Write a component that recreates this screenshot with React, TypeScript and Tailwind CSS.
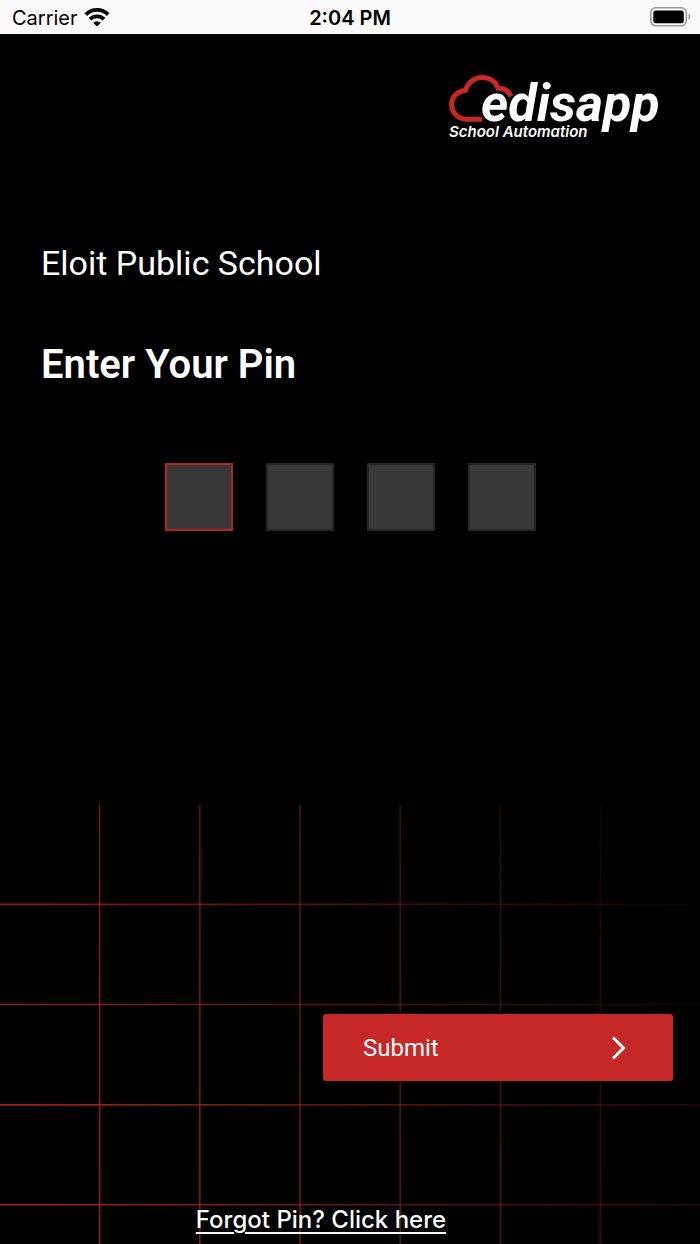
import { useState } from "react";

const PIN_LENGTH = 4;

function StatusBar() {
  return (
    <header className="grid h-[34px] grid-cols-3 items-center bg-[#fafafa] px-2 pt-0.5 font-['Inter',sans-serif] text-xl text-black">
      <div className="flex items-center gap-1.5 pl-1">
        <span>Carrier</span>
        <svg width="26" height="20" viewBox="0 1 26 20" aria-hidden="true">
          <g fill="none" stroke="#000" strokeWidth="3.8">
            <path d="M1.8 7.6a15.8 15.8 0 0 1 22.4 0" />
            <path d="M6 12.2a10 10 0 0 1 14 0" />
          </g>
          <path d="M13 19.6l-3.8-3.8a5.4 5.4 0 0 1 7.6 0z" />
        </svg>
      </div>
      <span className="text-center font-semibold">2:04 PM</span>
      <svg className="justify-self-end" width="42" height="22" viewBox="0 0 42 22" aria-hidden="true">
        <rect x="0.8" y="0.8" width="35.5" height="18" rx="5" fill="none" stroke="#9b9b9b" strokeWidth="1.6" />
        <rect x="3.3" y="3.4" width="30.5" height="12.8" rx="2.5" />
        <path d="M38.5 6.5v6.4c2.4-.9 2.4-5.5 0-6.4z" fill="#9b9b9b" />
      </svg>
    </header>
  );
}

function Logo() {
  return (
    <svg
      className="self-end overflow-visible"
      width="210"
      height="84"
      viewBox="0 -12 210 84"
      role="img"
      aria-label="edisapp School Automation"
    >
      <path
        d="M33 44.2H18C9 44.2 2.6 38 2.6 29.5c0-8 6-13.500 14-14.3C18.5 8 25 2.600 33 2.6c7.500 0 13.500 4 16.2 10.7c6-.4 10.300 2.500 12.800 8.2"
        fill="none"
        stroke="#c62828"
        strokeWidth="5"
      />
      <text x="32" y="46" fill="#fff" className="font-['Roboto',sans-serif] text-[52px] font-bold italic">
        edisapp
      </text>
      <text x="0" y="62" fill="#fff" className="font-['Inter',sans-serif] text-[15px] font-semibold italic">
        School Automation
      </text>
    </svg>
  );
}

function GridLines() {
  return (
    <svg
      className="absolute inset-0 h-full w-full"
      viewBox="0 0 700 439"
      preserveAspectRatio="xMinYMin slice"
      aria-hidden="true"
    >
      <defs>
        <linearGradient id="fade" gradientUnits="userSpaceOnUse" x1="0" y1="400" x2="740" y2="40">
          <stop offset="0" stopColor="#a82020" />
          <stop offset="1" stopColor="#a82020" stopOpacity="0" />
        </linearGradient>
      </defs>
      <g fill="none" stroke="url(#fade)" strokeWidth="1.6">
        <path d="M99.6 0v439M199.8 0v439M300 0v439M400.2 0v439M500.3 0v439M600.4 0v439" />
        <path d="M0 99.4h700M0 199.5h700M0 299.9h700M0 399.8h700" />
      </g>
    </svg>
  );
}

export default function App() {
  const [pin, setPin] = useState<string[]>(Array(PIN_LENGTH).fill(""));
  const [active, setActive] = useState(0);

  const handleChange = (i: number, value: string) => {
    setPin((prev) => prev.map((d, j) => (j === i ? value.slice(-1) : d)));
  };

  return (
    <div className="flex min-h-screen flex-col bg-black text-white">
      <StatusBar />

      <form className="flex flex-1 flex-col" onSubmit={(e) => e.preventDefault()}>
        <div className="flex flex-1 flex-col px-[41px] pt-[29px]">
          <Logo />
          <p className="mt-24 font-['Roboto',sans-serif] text-[34px] leading-10">Eloit Public School</p>
          <h1 className="mt-[58px] font-['Roboto',sans-serif] text-[40px] font-semibold leading-[48px]">Enter Your Pin</h1>

          {/* Pin boxes */}
          <div className="mt-[74px] flex justify-center gap-[33px]">
            {pin.map((digit, i) => (
              <input
                key={i}
                type="password"
                inputMode="numeric"
                aria-label={`Pin digit ${i + 1}`}
                value={digit}
                onFocus={() => setActive(i)}
                onChange={(e) => handleChange(i, e.target.value)}
                className={`size-[68px] border-2 bg-[#393939] text-center text-3xl outline-none ${
                  i === active ? "border-[#b02525]" : "border-[#272727]"
                }`}
              />
            ))}
          </div>
        </div>

        {/* Actions over the grid */}
        <div className="relative flex flex-col px-[27px] pb-2 pt-[209px]">
          <GridLines />
          <button
            type="submit"
            className="relative flex h-[67px] w-[350px] items-center justify-between self-end rounded-[3px] bg-[#c62828] pl-10 pr-[46px] font-['Roboto',sans-serif] text-2xl"
          >
            Submit
            <svg width="16" height="24" viewBox="0 0 16 24" fill="none" stroke="#fff" strokeWidth="3" aria-hidden="true">
              <path d="M2 1.5l10.5 10.5-10.5 10.5" />
            </svg>
          </button>
          <div className="relative mt-[123px] pr-[58px] text-center">
            <a href="#" className="font-['Inter',sans-serif] text-2xl font-medium underline decoration-2 underline-offset-4">
              Forgot Pin? Click here
            </a>
          </div>
        </div>
      </form>
    </div>
  );
}
